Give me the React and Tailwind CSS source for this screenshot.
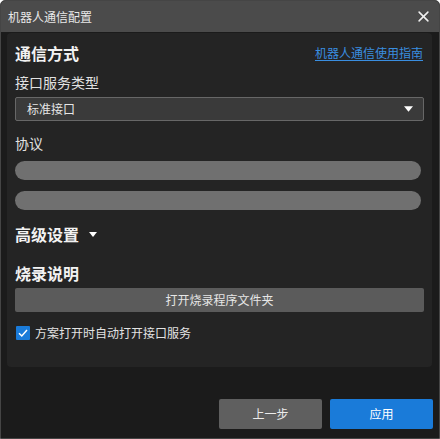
import { useState } from 'react'

const font = { fontFamily: '"Noto Sans CJK SC", "Noto Sans", sans-serif' }

function Caret({ className }) {
    return (
        <svg className={className} viewBox="0 0 10 6" fill="currentColor">
            <polygon points="0,0 10,0 5,6" />
        </svg>
    )
}

export default function App() {
    const [autoOpen, setAutoOpen] = useState(true)

    return (
        <div style={font} className="w-[440px] h-[439px] bg-[#1b1b1b] border border-[#454545] rounded-t-[5px] flex flex-col overflow-hidden">
            {/* Title bar */}
            <div className="h-[31px] shrink-0 bg-[#4b4b4b] flex items-center justify-between pl-[7px] pr-[10px]">
                <span className="text-[12px] text-[#e8e8e8] leading-none">机器人通信配置</span>
                <svg className="w-[11px] h-[11px] text-[#f0f0f0]" viewBox="0 0 10 10" fill="none" stroke="currentColor" strokeWidth="1.4" strokeLinecap="round">
                    <path d="M1 1 L9 9 M9 1 L1 9" />
                </svg>
            </div>

            {/* Panel */}
            <div className="mx-[6px] mr-[7px] mt-px h-[334px] bg-[#242424] rounded-[4px] px-[8px] pt-[8px] flex flex-col">
                <div className="h-[24px] flex items-center justify-between">
                    <span className="text-[16px] font-bold text-[#f2f2f2]">通信方式</span>
                    <a className="text-[12px] text-[#3a8ee0] underline underline-offset-2 mr-[1px]">机器人通信使用指南</a>
                </div>

                <div className="mt-[7px] h-[20px] flex items-center text-[14px] text-[#e2e2e2]">接口服务类型</div>

                <div className="mt-[5px] h-[24px] border border-[#676767] bg-[#3a3a3a] rounded-[2px] flex items-center justify-between pl-[11px] pr-[10px]">
                    <span className="text-[12px] text-[#e6e6e6]">标准接口</span>
                    <Caret className="w-[9px] h-[6px] text-white" />
                </div>

                <div className="mt-[12px] h-[20px] flex items-center text-[14px] text-[#e2e2e2]">协议</div>

                <div className="mt-[8px] h-[19px] w-[406px] rounded-full bg-[#707070]" />
                <div className="mt-[11px] h-[19px] w-[406px] rounded-full bg-[#707070]" />

                <div className="mt-[12px] h-[24px] flex items-center gap-[10px]">
                    <span className="text-[16px] font-bold text-[#f2f2f2]">高级设置</span>
                    <Caret className="w-[8px] h-[5px] text-white" />
                </div>

                <div className="mt-[15px] h-[24px] flex items-center text-[16px] font-bold text-[#f2f2f2]">烧录说明</div>

                <button className="mt-[3px] h-[24px] bg-[#5b5b5b] rounded-[2px] text-[12px] text-[#e6e6e6] flex items-center justify-center">
                    打开烧录程序文件夹
                </button>

                <label className="mt-[11px] h-[20px] flex items-center gap-[5px] pl-[1px]">
                    <span
                        onClick={() => setAutoOpen(!autoOpen)}
                        className="w-[14px] h-[14px] bg-[#1a7bd9] rounded-[1px] flex items-center justify-center"
                    >
                        {autoOpen && (
                            <svg className="w-[10px] h-[10px]" viewBox="0 0 10 10" fill="none" stroke="white" strokeWidth="1.5">
                                <path d="M1 5.2 L3.8 8 L9 2" />
                            </svg>
                        )}
                    </span>
                    <span className="text-[12px] text-[#e2e2e2]">方案打开时自动打开接口服务</span>
                </label>
            </div>

            {/* Footer */}
            <div className="mt-auto mb-[9px] mr-[6px] flex justify-end gap-[8px]">
                <button className="w-[103px] h-[30px] bg-[#5f5f5f] rounded-[2px] text-[12px] text-[#ececec]">上一步</button>
                <button className="w-[103px] h-[30px] bg-[#1a7bd9] rounded-[2px] text-[12px] text-white">应用</button>
            </div>
        </div>
    )
}
